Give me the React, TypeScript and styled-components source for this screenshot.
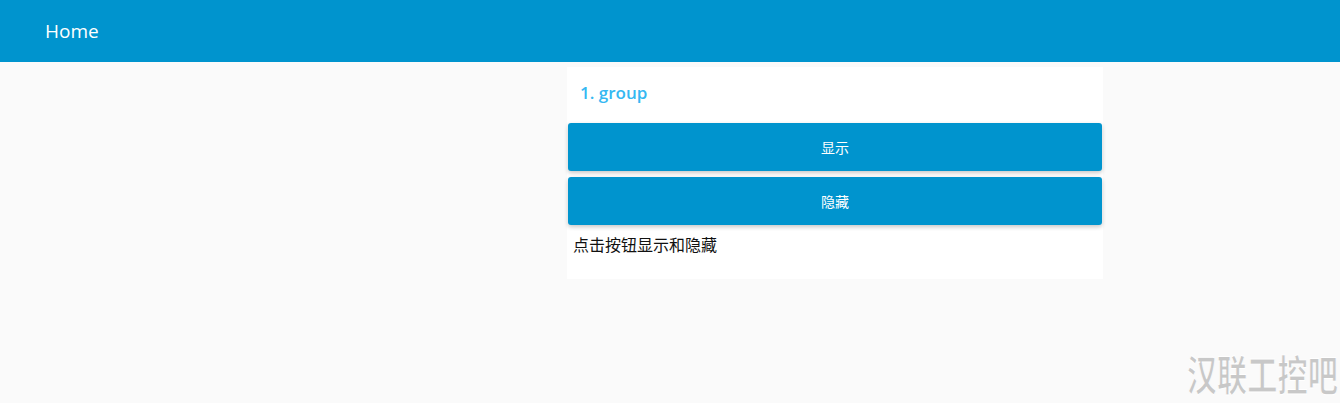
import React from 'react';
import styled, { createGlobalStyle } from 'styled-components';

const GlobalStyle = createGlobalStyle`
  html, body {
    margin: 0;
    padding: 0;
    background: #fafafa;
    font-family: "Open Sans", "Noto Sans", "Noto Sans CJK SC", sans-serif;
  }
`;

const Page = styled.div`
  position: relative;
  width: 1340px;
  height: 403px;
  overflow: hidden;
  background: #fafafa;
`;

const Toolbar = styled.header`
  display: flex;
  align-items: center;
  height: 62px;
  padding: 0 0 0 45px;
  background: #0094ce;
  color: #ffffff;
  font-size: 19px;
  font-weight: 500;
  box-sizing: border-box;
`;

const Content = styled.main`
  display: flex;
  justify-content: flex-start;
  padding: 5px 0 0 567px;
`;

const Group = styled.section`
  display: flex;
  flex-direction: column;
  width: 536px;
  height: 212px;
  background: #ffffff;
  box-sizing: border-box;
`;

const GroupTitle = styled.h3`
  margin: 0;
  height: 56px;
  box-sizing: border-box;
  padding: 15px 0 0 13px;
  font-size: 17px;
  line-height: 22px;
  font-weight: 600;
  color: #35b8f2;
`;

const ButtonList = styled.div`
  display: flex;
  flex-direction: column;
  gap: 6px;
  padding: 0 1px;
`;

const Button = styled.button`
  height: 48px;
  border: none;
  border-radius: 3px;
  background: #0094ce;
  color: #ffffff;
  font-family: "Noto Sans CJK SC", sans-serif;
  font-size: 14px;
  box-shadow: 0 2px 4px rgba(0, 0, 0, 0.22);
  cursor: pointer;
`;

const Note = styled.div`
  padding: 8px 0 0 6px;
  font-family: "Noto Sans CJK SC", sans-serif;
  font-size: 16px;
  line-height: 22px;
  color: #111111;
`;

const Watermark = styled.div`
  position: absolute;
  right: 2px;
  bottom: 0;
  font-family: "Noto Sans CJK SC", sans-serif;
  font-size: 42px;
  line-height: normal;
  font-weight: 700;
  white-space: nowrap;
  color: #c8c8c8;
  -webkit-text-stroke: 1px #ffffff;
  transform: scaleX(0.72);
  transform-origin: right bottom;
`;

const App: React.FC = () => {
  return (
    <Page>
      <GlobalStyle />
      <Toolbar>Home</Toolbar>
      <Content>
        <Group>
          <GroupTitle>1. group</GroupTitle>
          <ButtonList>
            <Button>显示</Button>
            <Button>隐藏</Button>
          </ButtonList>
          <Note>点击按钮显示和隐藏</Note>
        </Group>
      </Content>
      <Watermark>汉联工控吧</Watermark>
    </Page>
  );
};

export default App;
